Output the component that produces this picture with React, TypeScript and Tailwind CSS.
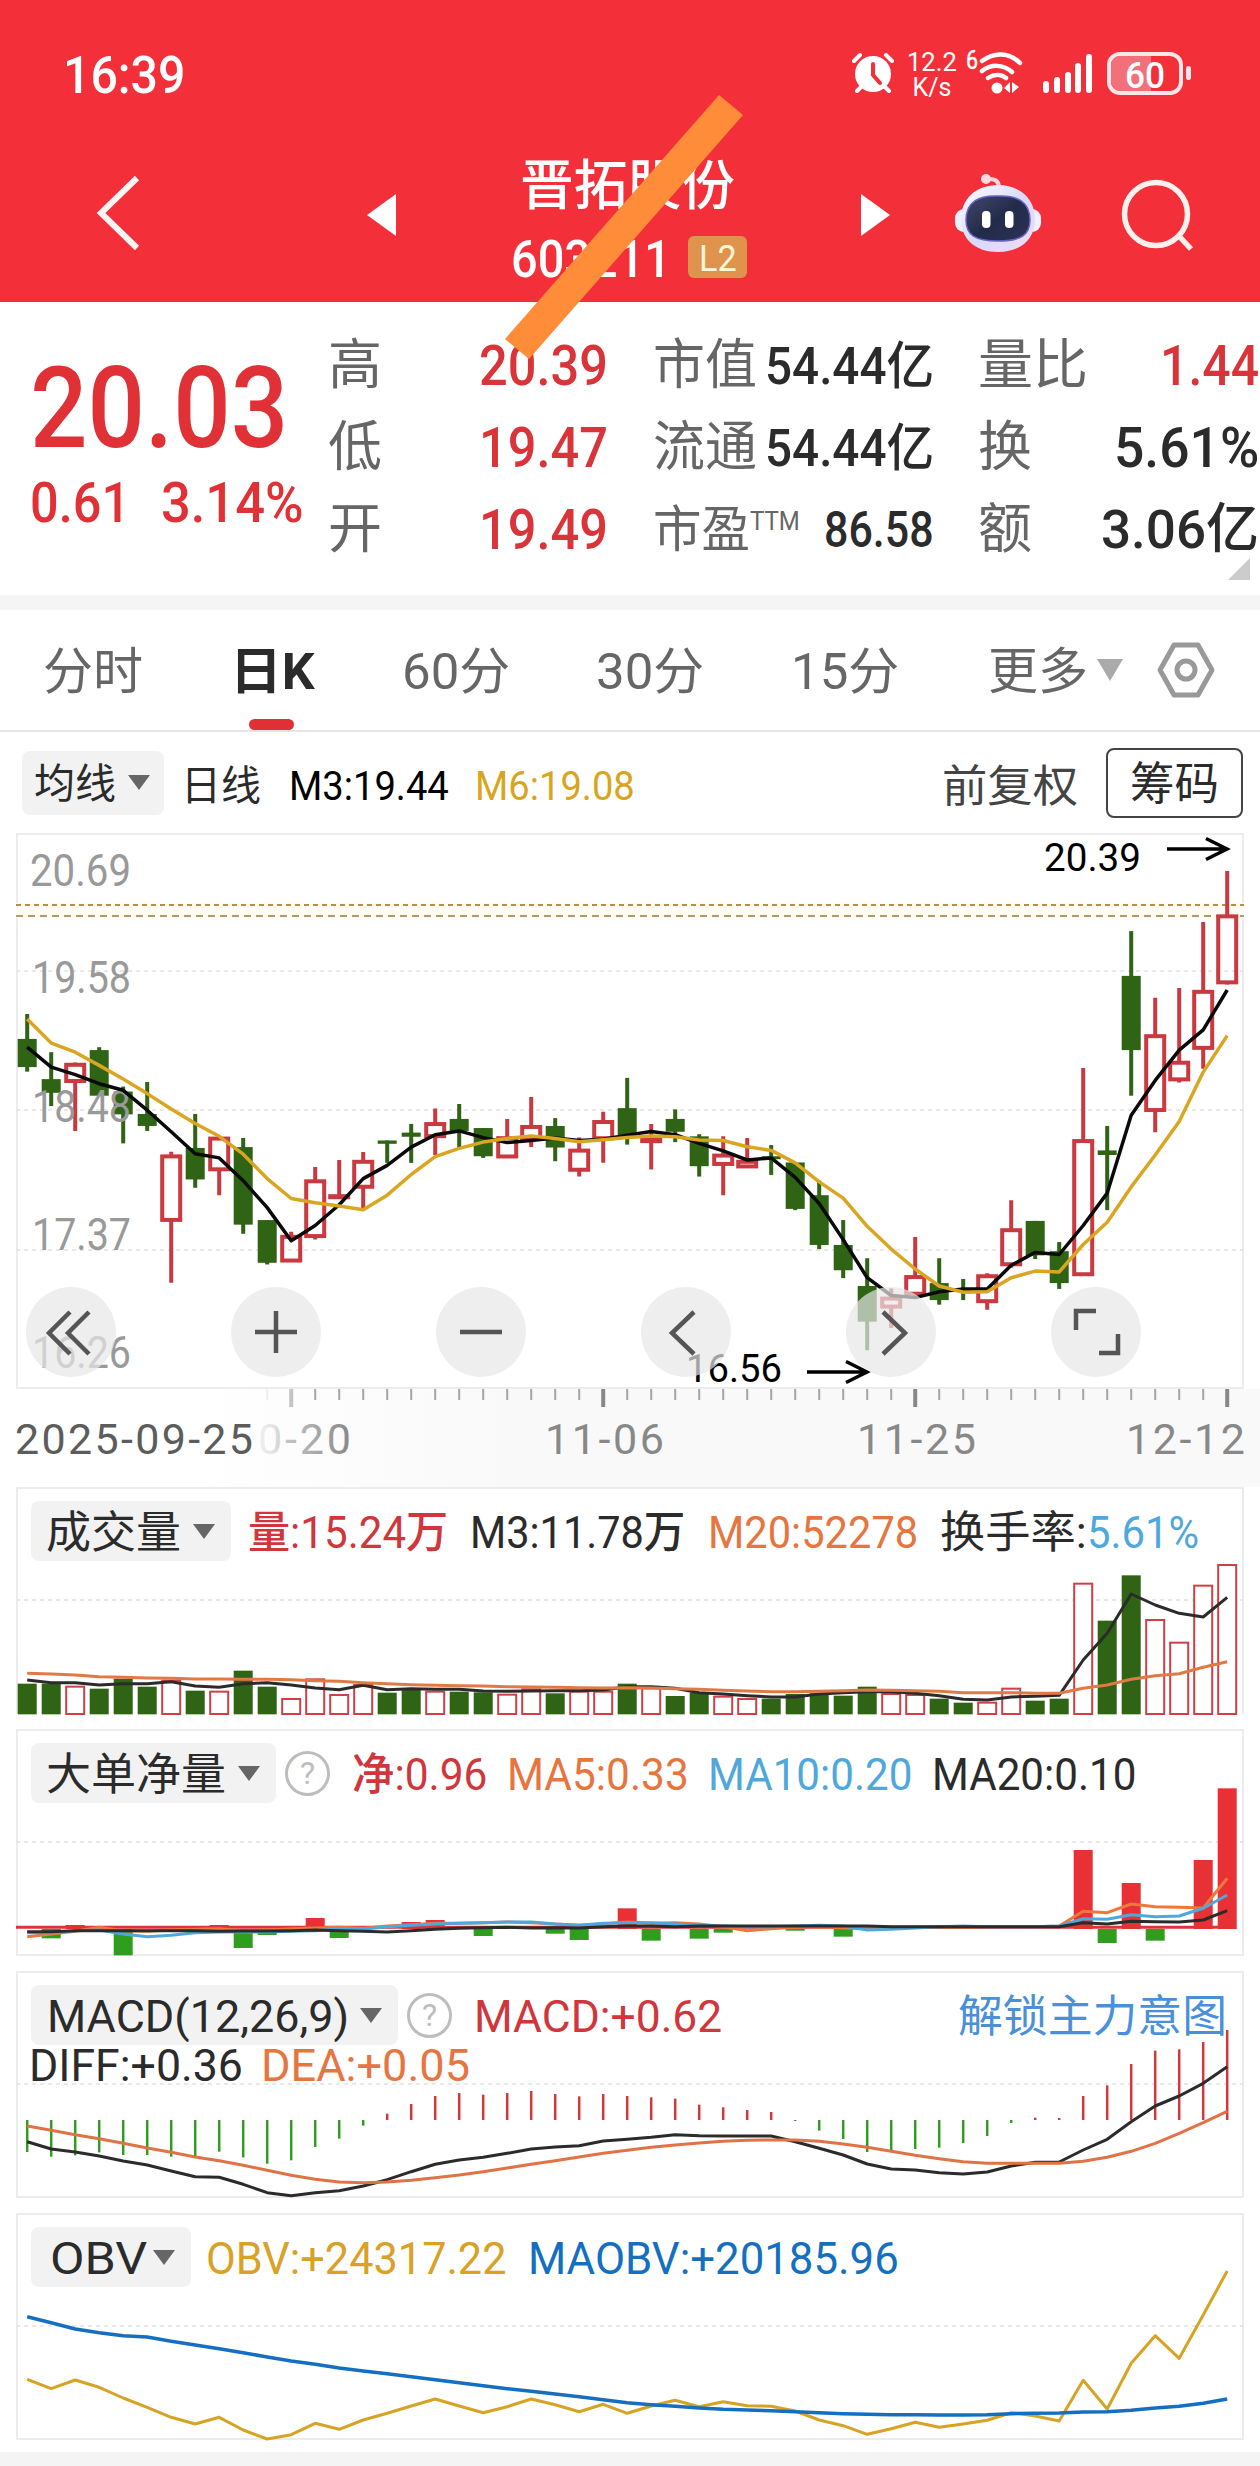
import { useLayoutEffect, useRef, useState, type ReactNode } from "react";
import { clsx } from "clsx";

const STEP = 24;
const BAR = 19;
const cx = (i: number) => 11.2 + i * STEP;

type Candle = [kind: "up" | "down", high: number, top: number, bottom: number, low: number];

// chart units, converted to panel pixels by the scales below
const candles: Candle[] = [
  ["down", 468, 528, 596, 607],
  ["down", 560, 625, 658, 690],
  ["up", 585, 588, 632, 750],
  ["down", 548, 555, 665, 665],
  ["down", 643, 655, 710, 780],
  ["down", 632, 709, 738, 750],
  ["up", 800, 809, 967, 1116],
  ["down", 709, 791, 867, 887],
  ["up", 763, 766, 845, 905],
  ["down", 767, 789, 976, 998],
  ["down", 965, 965, 1068, 1072],
  ["up", 993, 1003, 1065, 1066],
  ["up", 837, 869, 1006, 1012],
  ["up", 820, 905, 910, 910],
  ["up", 801, 822, 887, 940],
  ["down", 773, 773, 781, 827],
  ["down", 733, 754, 764, 827],
  ["up", 696, 731, 765, 808],
  ["down", 685, 721, 750, 790],
  ["down", 743, 743, 811, 815],
  ["up", 721, 765, 814, 815],
  ["up", 668, 738, 770, 789],
  ["down", 719, 738, 790, 823],
  ["up", 766, 795, 846, 860],
  ["up", 704, 726, 770, 827],
  ["down", 622, 695, 765, 783],
  ["up", 733, 765, 777, 843],
  ["down", 698, 721, 752, 777],
  ["down", 758, 763, 835, 860],
  ["up", 763, 807, 832, 905],
  ["up", 767, 822, 838, 838],
  ["down", 784, 811, 818, 856],
  ["down", 826, 826, 938, 941],
  ["down", 870, 905, 1025, 1035],
  ["down", 965, 1025, 1086, 1105],
  ["down", 1057, 1124, 1210, 1279],
  ["up", 1130, 1152, 1176, 1225],
  ["up", 1006, 1100, 1145, 1150],
  ["down", 1057, 1117, 1158, 1169],
  ["down", 1107, 1131, 1138, 1158],
  ["up", 1093, 1098, 1163, 1181],
  ["up", 917, 987, 1074, 1080],
  ["down", 967, 967, 1050, 1059],
  ["down", 1018, 1040, 1117, 1131],
  ["up", 598, 772, 1098, 1098],
  ["down", 738, 797, 808, 941],
  ["down", 268, 376, 555, 665],
  ["up", 429, 519, 702, 753],
  ["up", 405, 583, 628, 633],
  ["up", 246, 412, 552, 600],
  ["up", 123, 230, 394, 397],
];

const ma3 = [548, 596, 614, 636, 652, 700, 752, 805, 815, 870, 935, 1015, 978, 928, 865, 833, 789, 759, 750, 766, 778, 773, 767, 773, 770, 760, 751, 759, 780, 798, 820, 815, 862, 925, 1012, 1104, 1147, 1152, 1138, 1131, 1131, 1074, 1043, 1048, 978, 900, 712, 628, 555, 506, 410];
const ma6 = [480, 538, 560, 592, 625, 660, 697, 732, 763, 806, 865, 913, 923, 931, 940, 905, 855, 812, 792, 777, 768, 762, 768, 776, 771, 766, 762, 764, 772, 773, 788, 797, 827, 873, 912, 980, 1035, 1083, 1124, 1139, 1138, 1104, 1088, 1090, 1024, 970, 885, 808, 727, 608, 520];

const volume = [641, 641, 650, 656, 626, 650, 632, 662, 665, 602, 650, 687, 628, 675, 645, 668, 655, 665, 665, 667, 674, 658, 670, 665, 665, 641, 655, 678, 668, 680, 687, 686, 672, 670, 677, 650, 672, 675, 686, 698, 698, 656, 692, 686, 341, 452, 316, 450, 518, 347, 285];
const volumeUp = new Set([2, 6, 8, 11, 12, 13, 14, 17, 20, 21, 23, 24, 26, 29, 30, 36, 37, 40, 41, 44, 47, 48, 49, 50]);
const volM3 = [630, 638, 638, 645, 641, 641, 635, 648, 652, 641, 638, 645, 654, 659, 646, 659, 656, 658, 658, 663, 664, 663, 662, 662, 660, 650, 650, 655, 668, 672, 677, 681, 681, 672, 668, 665, 665, 670, 677, 688, 690, 681, 679, 676, 570, 490, 372, 405, 430, 441, 382];
const volM20 = [610, 612, 615, 620, 622, 624, 625, 627, 627, 628, 628, 629, 632, 634, 638, 641, 644, 646, 647, 648, 650, 651, 652, 653, 654, 653, 654, 656, 658, 661, 663, 665, 665, 664, 662, 660, 661, 662, 664, 668, 668, 668, 670, 670, 655, 645, 628, 617, 611, 592, 575];

const netFlow: [index: number, end: number][] = [
  [1, 655], [2, 615], [4, 706], [8, 615], [9, 684], [10, 645], [12, 594], [13, 654], [16, 606], [17, 600],
  [19, 648], [22, 641], [23, 660], [25, 565], [26, 662], [28, 656], [29, 638], [32, 632], [34, 650],
  [44, 390], [45, 669], [46, 489], [47, 662], [49, 420], [50, 205],
];
const flowMa5 = [650, 642, 634, 622, 632, 634, 630, 628, 626, 632, 630, 626, 624, 622, 625, 618, 614, 610, 610, 608, 606, 608, 612, 616, 612, 606, 610, 608, 612, 620, 632, 626, 622, 620, 624, 626, 624, 622, 622, 622, 620, 620, 620, 618, 574, 578, 552, 560, 562, 564, 475];
const flowMa10 = [638, 638, 632, 630, 642, 650, 646, 638, 636, 636, 636, 634, 632, 626, 628, 620, 616, 612, 610, 608, 606, 606, 612, 616, 610, 608, 608, 612, 616, 618, 620, 620, 618, 616, 618, 630, 628, 624, 620, 618, 620, 620, 620, 618, 596, 598, 584, 590, 588, 565, 525];
const flowMa20 = [635, 635, 632, 632, 632, 632, 632, 632, 634, 633, 633, 632, 630, 632, 634, 636, 632, 628, 625, 623, 622, 624, 623, 624, 620, 618, 618, 620, 618, 618, 618, 618, 618, 618, 618, 618, 620, 620, 620, 620, 620, 620, 620, 620, 608, 612, 604, 605, 606, 600, 572];

const macd = [576, 590, 586, 577, 585, 585, 590, 590, 575, 592, 611, 601, 561, 536, 497, 461, 432, 408, 399, 404, 399, 393, 402, 409, 402, 408, 412, 416, 434, 442, 450, 456, 483, 512, 537, 576, 572, 567, 563, 549, 528, 489, 473, 474, 408, 376, 312, 272, 268, 246, 210];
const diff = [545, 567, 576, 588, 603, 615, 633, 650, 652, 673, 698, 707, 698, 692, 678, 659, 635, 613, 600, 592, 580, 567, 561, 557, 543, 538, 532, 524, 527, 528, 528, 528, 545, 565, 585, 612, 627, 630, 638, 642, 636, 618, 607, 606, 570, 538, 485, 438, 408, 370, 320];
const dea = [498, 511, 524, 536, 550, 564, 577, 591, 602, 616, 631, 646, 658, 666, 668, 666, 661, 653, 645, 635, 624, 613, 602, 591, 580, 571, 562, 555, 549, 544, 541, 540, 540, 544, 552, 562, 574, 586, 596, 605, 610, 610, 610, 610, 604, 592, 574, 550, 520, 488, 454];

const obv = [538, 566, 540, 562, 594, 622, 652, 672, 652, 690, 717, 704, 670, 688, 660, 640, 618, 597, 618, 638, 620, 597, 614, 635, 613, 640, 618, 601, 620, 605, 617, 619, 633, 660, 677, 703, 686, 667, 682, 672, 661, 638, 648, 663, 541, 627, 490, 407, 475, 345, 213];
const maObv = [350, 368, 387, 398, 407, 411, 424, 435, 446, 458, 471, 483, 493, 504, 513, 521, 530, 539, 548, 557, 566, 574, 582, 590, 599, 608, 614, 619, 624, 628, 630, 632, 635, 638, 641, 643, 644, 644, 645, 645, 644, 641, 640, 639, 636, 635, 631, 624, 619, 610, 597];

const priceY = (v: number) => v / 2.412 - 13;
const volY = (v: number) => v / 3 - 17;
const flowY = (v: number) => v / 3 - 9;
const macdY = (v: number) => v / 3 - 11;
const obvY = (v: number) => v / 3 - 13;

// Text squeezed or stretched to the width set in className
function Fit({ className, children }: { className: string; children: ReactNode }) {
  const inner = useRef<HTMLSpanElement>(null);
  const [ratio, setRatio] = useState(1);

  useLayoutEffect(() => {
    const el = inner.current;
    if (!el || !el.parentElement) return;
    setRatio(el.parentElement.clientWidth / el.offsetWidth);
  }, [children]);

  return (
    <span className={clsx("block shrink-0 translate-y-0.5 leading-none whitespace-nowrap", className)}>
      <span ref={inner} className="inline-block origin-left" style={{ transform: `scaleX(${ratio})` }}>
        {children}
      </span>
    </span>
  );
}

function Line({ data, y, color, width = 3 }: { data: number[]; y: (v: number) => number; color: string; width?: number }) {
  return (
    <polyline
      points={data.map((v, i) => `${cx(i)},${y(v).toFixed(1)}`).join(" ")}
      fill="none"
      stroke={color}
      strokeWidth={width}
      strokeLinejoin="round"
    />
  );
}

function GridLine({ y }: { y: number }) {
  return <line x1="0" x2="1228" y1={y} y2={y} stroke="#e8e8e8" strokeWidth="2" strokeDasharray="4 4" />;
}

function Caret({ className }: { className?: string }) {
  return (
    <svg viewBox="0 0 22 15" className={clsx("h-[15px] w-[22px] shrink-0", className)}>
      <path d="M0 0h22L11 15z" fill="currentColor" />
    </svg>
  );
}

function Help() {
  return (
    <span className="flex size-[45px] shrink-0 items-center justify-center rounded-full border-[3px] border-[#bdbdbd] text-[32px] leading-none text-[#bdbdbd]">
      ?
    </span>
  );
}

function Panel({ className, chart, children }: { className: string; chart: ReactNode; children: ReactNode }) {
  return (
    <section className={clsx("relative mx-4 w-[1228px] border-2 border-[#ececec]", className)}>
      <svg className="absolute -top-0.5 -left-0.5 h-full w-[1228px] overflow-visible">{chart}</svg>
      {children}
    </section>
  );
}

function Picker({ className, width, label }: { className: string; width: string; label: string }) {
  return (
    <button className={clsx("flex h-[60px] shrink-0 items-center justify-between rounded-lg bg-[#f2f2f2] pr-4 pl-[13px] text-[#2b2b2b]", className)}>
      <Fit className={width}>{label}</Fit>
      <Caret className="text-[#666]" />
    </button>
  );
}

function StatusBar() {
  return (
    <div className="flex h-[146px] items-center pl-[63px] text-white">
      <Fit className="w-[122px] text-[51px] font-medium">16:39</Fit>
      <svg viewBox="0 0 42 42" className="ml-[667px] h-[42px] w-[42px]" fill="none" stroke="white" strokeLinecap="round">
        <circle cx="21" cy="22" r="18" fill="white" stroke="none" />
        <path d="M2 9l6-6M40 9l-6-6M9 35l-4 4M33 35l4 4" strokeWidth="4" />
        <path d="M21 12v11l7 8" stroke="#f32f39" strokeWidth="4" />
      </svg>
      <div className="ml-[13px] flex w-[50px] flex-col items-center font-[450]">
        <Fit className="w-[50px] text-[25px]">12.2</Fit>
        <Fit className="w-[39px] text-[25px]">K/s</Fit>
      </div>
      <svg viewBox="0 0 56 44" className="ml-[10px] h-11 w-14 overflow-visible" fill="none" stroke="white" strokeWidth="4.5" strokeLinecap="round">
        <text x="-1" y="18" className="text-[25px]" fill="white" stroke="white" strokeWidth="0.5" textLength="12" lengthAdjust="spacingAndGlyphs">6</text>
        <path d="M15 10c12-9 27-9 38 2M15 20c9-7 21-7 30 1M21 27c6-4 13-4 18 0" />
        <circle cx="30" cy="37" r="5.5" fill="white" stroke="none" />
        <path d="M43 31v11l-6-5zM45 31v11l7-6z" fill="white" stroke="none" />
      </svg>
      <svg viewBox="0 0 50 40" className="ml-[19px] h-10 w-[50px]" stroke="white" strokeWidth="6" strokeLinecap="round">
        <path d="M4 31v6M15 27v10M26 22v15M36 13v24M47 4v33" />
      </svg>
      <div className="relative ml-[15px] flex h-[43px] w-[76px] items-center justify-center overflow-hidden rounded-[13px] border-4 border-[#ffe6e6]">
        <span className="absolute inset-y-0 left-0 w-[40px] bg-[#f2707a]" />
        <Fit className="relative w-[40px] text-[37px] font-medium">60</Fit>
      </div>
      <span className="ml-[3px] h-[14px] w-[5px] rounded-full bg-[#ffe6e6]" />
    </div>
  );
}

function Robot() {
  return (
    <svg viewBox="0 0 86 80" className="ml-[65px] h-20 w-[86px]">
      <defs>
        <linearGradient id="shell" x1="0" y1="0" x2="1" y2="1">
          <stop offset="0" stopColor="#fff" />
          <stop offset="0.5" stopColor="#d7dafa" />
          <stop offset="1" stopColor="#f0dcf5" />
        </linearGradient>
        <linearGradient id="visor" x1="0" y1="0" x2="1" y2="1">
          <stop offset="0" stopColor="#44486b" />
          <stop offset="0.5" stopColor="#232b4a" />
          <stop offset="1" stopColor="#2b3252" />
        </linearGradient>
      </defs>
      <path d="M44 15c0-6-3-9-9-9" fill="none" stroke="#ffd3dc" strokeWidth="4" />
      <circle cx="31" cy="6" r="5" fill="#ffd9e0" />
      <rect x="0" y="36" width="86" height="23" rx="9" fill="#eef0ff" />
      <path d="M43 12c22 0 37 14 37 34S66 79 43 79 6 66 6 46s15-34 37-34z" fill="url(#shell)" />
      <path d="M43 23c19-1 32 6 32 24 0 15-9 21-32 21s-32-6-32-21c0-18 13-25 32-24z" fill="url(#visor)" stroke="#6b63c4" strokeWidth="1.5" />
      <rect x="27" y="38" width="8.500" height="17" rx="4" fill="#fff" />
      <rect x="50" y="38" width="8.500" height="17" rx="4" fill="#fff" />
    </svg>
  );
}

function Header() {
  return (
    <header className="relative h-[302px] bg-[#f32f39] text-white">
      <StatusBar />
      <div className="flex h-[134px] items-center pl-[96px]">
        <svg viewBox="0 0 44 76" className="h-[76px] w-11" fill="none" stroke="#fff4f4" strokeWidth="6">
          <path d="M41 3L5 38l36 35" />
        </svg>
        <svg viewBox="0 0 29 42" className="mt-1 ml-[227px] h-[42px] w-[29px]">
          <path d="M29 0v42L0 21z" fill="white" />
        </svg>
        <div className="mt-3.5 ml-[115px] flex w-[236px] flex-col">
          <Fit className="ml-[9px] w-[215px] text-[54px] font-medium">晋拓股份</Fit>
          <div className="mt-5 flex items-center">
            <Fit className="w-[160px] text-[51px] font-medium">603211</Fit>
            <span className="ml-[17px] flex h-[42px] w-[60px] items-center justify-center rounded-md bg-[#e0934d] text-[#fff6d8]">
              <Fit className="w-[38px] text-[36px]">L2</Fit>
            </span>
          </div>
        </div>
        <svg viewBox="0 0 29 42" className="mt-1 ml-[114px] h-[42px] w-[29px]">
          <path d="M0 0v42l29-21z" fill="white" />
        </svg>
        <Robot />
        <svg viewBox="0 0 74 72" className="mt-1 ml-20 h-[72px] w-[74px]" fill="none" stroke="#fff0ee" strokeWidth="5.500">
          <circle cx="35" cy="35" r="31.500" />
          <path d="M57 56l13 14" />
        </svg>
      </div>
      <svg viewBox="0 0 240 266" className="absolute top-[94px] left-[504px] z-10 h-[266px] w-60">
        <path d="M215 1l24 20L25 265 1 245z" fill="#ff8c38" />
      </svg>
    </header>
  );
}

function Quote() {
  return (
    <section className="flex h-[293px] pt-[21px] pl-[31px] font-medium text-[#2b2b2b]">
      <div className="w-[297px] text-[#e03236]">
        <Fit className="mt-[27px] ml-[-1px] w-[258px] text-[113px]">20.03</Fit>
        <div className="mt-[11px] flex">
          <Fit className="ml-[-1px] w-[100px] text-[55px]">0.61</Fit>
          <Fit className="ml-[31px] w-[143px] text-[55px]">3.14%</Fit>
        </div>
      </div>

      <div className="w-[280px]">
        {[["高", "20.39"], ["低", "19.47"], ["开", "19.49"]].map(([label, value]) => (
          <div key={label} className="flex h-[82px] items-center justify-between text-[#d9343a]">
            <Fit className="w-[54px] text-[54px] font-normal text-[#666]">{label}</Fit>
            <Fit className="w-[129px] text-[56px]">{value}</Fit>
          </div>
        ))}
      </div>

      <div className="ml-[45px] w-[281px]">
        {[["市值", "54.44亿"], ["流通", "54.44亿"]].map(([label, value]) => (
          <div key={label} className="flex h-[82px] items-center justify-between">
            <Fit className="w-[104px] text-[54px] font-normal text-[#666]">{label}</Fit>
            <Fit className="w-[169px] text-[51px]">{value}</Fit>
          </div>
        ))}
        <div className="flex h-[82px] items-center">
          <Fit className="w-[97px] text-[50px] font-normal text-[#666]">市盈</Fit>
          <Fit className="mb-[18px] w-[50px] text-[25px] font-normal text-[#666]">TTM</Fit>
          <Fit className="ml-[24px] w-[110px] text-[50px]">86.58</Fit>
        </div>
      </div>

      <div className="relative ml-[44px] w-[281px]">
        <div className="flex h-[82px] items-center justify-between">
          <Fit className="w-[110px] text-[54px] font-normal text-[#666]">量比</Fit>
          <Fit className="w-[99px] text-[56px] text-[#d9343a]">1.44</Fit>
        </div>
        <div className="flex h-[82px] items-center justify-between">
          <Fit className="w-[54px] text-[54px] font-normal text-[#666]">换</Fit>
          <Fit className="w-[145px] text-[56px]">5.61%</Fit>
        </div>
        <div className="flex h-[82px] items-center justify-between">
          <Fit className="w-[54px] text-[54px] font-normal text-[#666]">额</Fit>
          <Fit className="w-[158px] text-[54px]">3.06亿</Fit>
        </div>
        <svg viewBox="0 0 22 22" className="absolute top-[235px] right-[9px] size-[22px]">
          <path d="M22 0v22H0z" fill="#ccc" />
        </svg>
      </div>
    </section>
  );
}

function Tabs() {
  return (
    <nav className="flex h-[122px] items-center border-b-2 border-[#e6e6e6] pl-[43px] text-[50px] text-[#666]">
      <Fit className="w-[100px]">分时</Fit>
      <div className="relative ml-[87px]">
        <Fit className="w-[85px] font-bold text-[#2b2b2b]">日K</Fit>
        <span className="absolute top-[74px] left-[19px] h-[11px] w-[45px] rounded-full bg-[#e03034]" />
      </div>
      <Fit className="ml-[87px] w-[108px]">60分</Fit>
      <Fit className="ml-[86px] w-[108px]">30分</Fit>
      <Fit className="ml-[87px] w-[108px]">15分</Fit>
      <Fit className="ml-[89px] w-[100px]">更多</Fit>
      <svg viewBox="0 0 26 22" className="ml-[9px] h-[22px] w-[26px]">
        <path d="M0 0h26L13 22z" fill="#aaa" />
      </svg>
      <svg viewBox="0 0 58 56" className="ml-[34px] h-14 w-[58px]" fill="none" stroke="#999" strokeWidth="5" strokeLinejoin="round">
        <path d="M17 3h24l14 25-14 25H17L3 28z" />
        <circle cx="29" cy="28" r="9" />
      </svg>
    </nav>
  );
}

function AverageBar() {
  return (
    <div className="flex h-[101px] items-center pl-[22px] text-[41px] text-[#2b2b2b]">
      <button className="flex h-[64px] w-[142px] items-center justify-between rounded-lg bg-[#f2f2f2] px-3">
        <Fit className="w-[82px]">均线</Fit>
        <Caret className="mr-0.5 text-[#666]" />
      </button>
      <Fit className="mt-1 ml-[17px] w-[80px]">日线</Fit>
      <Fit className="mt-1 ml-[28px] w-[160px] font-[450] text-black">M3:19.44</Fit>
      <Fit className="mt-1 ml-[26px] w-[160px] font-[450] text-[#d9a520]">M6:19.08</Fit>
      <Fit className="mt-1 ml-[307px] w-[136px] text-[44px] text-[#444]">前复权</Fit>
      <button className="ml-[28px] flex h-[70px] w-[137px] items-center justify-center rounded-lg border-2 border-[#444]">
        <Fit className="w-[89px] text-[45px]">筹码</Fit>
      </button>
    </div>
  );
}

const axisPrices: [string, number, number][] = [
  ["20.69", 14, 53],
  ["19.58", 16, 160],
  ["18.48", 16, 289],
  ["17.37", 16, 417],
  ["16.26", 16, 535],
];

const tools = [
  "M-1-20l-21 21 21 21M18-20L-3 1l21 21",
  "M-21 0h42M0-21v42",
  "M-21 0h42",
  "M8-20L-14 1l22 21",
  "M-8-20L14 1l-22 21",
  "M-20-2v-19h20M3 21h19V2",
];

function PriceChart() {
  return (
    <section className="relative mx-4 h-[556px] w-[1228px] border-2 border-[#ececec]">
      <svg className="absolute -top-0.5 -left-0.5 h-[556px] w-[1228px] overflow-visible">
        <GridLine y={138} />
        <GridLine y={277} />
        <GridLine y={417} />
        <rect y="70" width="1228" height="15" fill="#fffdf3" />
        <line x2="1228" y1="72" y2="72" stroke="#c08a4a" strokeWidth="2" strokeDasharray="5 4" />
        <line x2="1228" y1="83" y2="83" stroke="#b59a63" strokeWidth="2" strokeDasharray="7 5" />
        {candles.map(([kind, high, top, bottom, low], i) => {
          const up = kind === "up";
          const y1 = priceY(top);
          const h = Math.max(priceY(bottom) - y1, 3);
          return up ? (
            <g key={i} stroke="#c9393f" strokeWidth="4" fill="none">
              <path d={`M${cx(i)} ${priceY(high)}V${y1}M${cx(i)} ${y1 + h}V${priceY(low)}`} />
              <rect x={cx(i) - 9} y={y1 + 1} width="18" height={Math.max(h - 2, 0.5)} />
            </g>
          ) : (
            <g key={i} fill="#2e6414">
              <rect x={cx(i) - 2} y={priceY(high)} width="4" height={priceY(low) - priceY(high)} />
              <rect x={cx(i) - 9.500} y={y1} width={BAR} height={h} />
            </g>
          );
        })}
        {axisPrices.map(([label, x, y]) => (
          <text key={label} x={x} y={y} fill="#999" className="text-[45px] font-[450]" textLength={label === "20.69" ? 101 : 99} lengthAdjust="spacingAndGlyphs">
            {label}
          </text>
        ))}
        <Line data={ma3} y={priceY} color="#0a0a0a" width={3.5} />
        <Line data={ma6} y={priceY} color="#daa520" width={3.5} />
        <g fill="#000" className="text-[39px]">
          <text x="1028" y="38" textLength="97" lengthAdjust="spacingAndGlyphs">20.39</text>
          <text x="670" y="549" textLength="96" lengthAdjust="spacingAndGlyphs">16.56</text>
        </g>
        <g fill="none" stroke="#000" strokeWidth="3.500">
          <path d="M1151 16h60M1190 5.500L1211 16l-21 10.500" />
          <path d="M791 539h60M830 528.500L851 539l-21 10.500" />
        </g>
      </svg>
      <div className="absolute top-[452px] left-[8px] flex gap-[115px]">
        {tools.map((d) => (
          <button key={d} className="size-[90px] rounded-full bg-[#e7e7e7]/70">
            <svg viewBox="-45 -45 90 90" className="size-[90px]" fill="none" stroke="#555" strokeWidth="4.500">
              <path d={d} />
            </svg>
          </button>
        ))}
      </div>
    </section>
  );
}

function DateAxis() {
  return (
    <div className="h-[98px] bg-linear-to-r from-white from-15% to-[#f9f9f9] to-40%">
      <svg className="h-[98px] w-[1260px]">
        <defs>
          <linearGradient id="fade" gradientUnits="userSpaceOnUse" x1="255" x2="350" y1="0" y2="0">
            <stop offset="0" stopColor="#f4f4f4" />
            <stop offset="0.2" stopColor="#e2e2e2" />
            <stop offset="0.3" stopColor="#c8c8c8" />
            <stop offset="1" stopColor="#888" />
          </linearGradient>
        </defs>
        {Array.from({ length: 41 }, (_, k) => {
          const i = k + 10;
          const major = [11, 24, 37, 50].includes(i);
          const color = i === 10 ? "#eee" : i === 11 ? "#c4c4c4" : major ? "#888" : "#a5a5a5";
          return <path key={i} d={`M${cx(i) + 16} 0v${major ? 18 : 11}`} stroke={color} strokeWidth={major ? 4 : 2} />;
        })}
        <g className="text-[43px] font-[450]" fill="#888">
          <text x="258" y="65" fill="url(#fade)" textLength="93" lengthAdjust="spacing">0-20</text>
          <text x="15" y="65" fill="#5c5c5c" textLength="238" lengthAdjust="spacing">2025-09-25</text>
          <text x="545" y="65" textLength="119" lengthAdjust="spacing">11-06</text>
          <text x="857" y="65" textLength="119" lengthAdjust="spacing">11-25</text>
          <text x="1126" y="65" textLength="119" lengthAdjust="spacing">12-12</text>
        </g>
      </svg>
    </div>
  );
}

function VolumePanel() {
  return (
    <Panel
      className="h-[227px] border-b-0"
      chart={
        <>
          <GridLine y={113} />
          {volume.map((v, i) =>
            volumeUp.has(i) ? (
              <rect key={i} x={cx(i) - 9} y={volY(v)} width="18" height={volY(732) - volY(v)} fill="#fff" stroke="#cf3f45" strokeWidth="2" />
            ) : (
              <rect key={i} x={cx(i) - 9.500} y={volY(v)} width={BAR} height={volY(733) - volY(v)} fill="#2e6414" />
            )
          )}
          <Line data={volM3} y={volY} color="#2b2b2b" />
          <Line data={volM20} y={volY} color="#e07a45" />
        </>
      }
    >
      <div className="relative flex items-center pt-3 pl-[13px] text-[44px] font-[450]">
        <Picker className="w-[200px] font-normal" width="w-[135px]" label="成交量" />
        <Fit className="ml-[17px] w-[200px] text-[#d0363c]">量:15.24万</Fit>
        <Fit className="ml-[22px] w-[215px] text-[#2b2b2b]">M3:11.78万</Fit>
        <Fit className="ml-[23px] w-[210px] text-[#e6753f]">M20:52278</Fit>
        <Fit className="ml-[22px] w-[147px] font-normal text-[#2b2b2b]">换手率:</Fit>
        <Fit className="w-[112px] text-[#4fa8db]">5.61%</Fit>
      </div>
    </Panel>
  );
}

function FlowPanel() {
  return (
    <Panel
      className="mt-[15px] h-[227px]"
      chart={
        <>
          <GridLine y={113} />
          {netFlow.map(([i, end]) => {
            const up = end < 622;
            return (
              <rect
                key={i}
                x={cx(i) - 9.500}
                y={up ? flowY(end) : flowY(627)}
                width={BAR}
                height={Math.abs(flowY(627) - flowY(end))}
                fill={up ? "#e93034" : "#2f9e1e"}
              />
            );
          })}
          <line x2="1219" y1={flowY(622)} y2={flowY(622)} stroke="#dd3437" strokeWidth="3" />
          <Line data={flowMa5} y={flowY} color="#f0763c" />
          <Line data={flowMa10} y={flowY} color="#4fa8db" />
          <Line data={flowMa20} y={flowY} color="#2b2b2b" />
        </>
      }
    >
      <div className="relative flex items-center pt-3 pl-[13px] text-[44px] font-[450]">
        <Picker className="w-[245px] font-normal" width="w-[180px]" label="大单净量" />
        <span className="ml-[9px]"><Help /></span>
        <Fit className="ml-[22px] w-[135px] text-[#d0363c]">净:0.96</Fit>
        <Fit className="ml-[20px] w-[182px] text-[#e6753f]">MA5:0.33</Fit>
        <Fit className="ml-[19px] w-[204px] text-[#4fa8db]">MA10:0.20</Fit>
        <Fit className="ml-[20px] w-[204px] text-[#2b2b2b]">MA20:0.10</Fit>
      </div>
    </Panel>
  );
}

function MacdPanel() {
  return (
    <Panel
      className="mt-[15px] h-[227px]"
      chart={
        <>
          <GridLine y={113} />
          {macd.map((v, i) => (
            <line key={i} x1={cx(i)} x2={cx(i)} y1={macdY(480)} y2={macdY(v)} stroke={v < 480 ? "#cf3a40" : "#2f9e1e"} strokeWidth="2.500" />
          ))}
          <Line data={diff} y={macdY} color="#2b2b2b" />
          <Line data={dea} y={macdY} color="#e07345" />
        </>
      }
    >
      <div className="relative pt-3 pl-[13px] text-[44px] font-[450]">
        <div className="flex items-center">
          <Picker className="w-[367px]" width="w-[302px]" label="MACD(12,26,9)" />
          <span className="ml-[9px]"><Help /></span>
          <Fit className="ml-[22px] w-[248px] text-[#d0363c]">MACD:+0.62</Fit>
          <Fit className="ml-[236px] w-[269px] font-normal text-[#4a90d9]">解锁主力意图</Fit>
        </div>
        <div className="-mt-[3px] flex items-center">
          <Fit className="-ml-[2px] w-[214px] text-[#2b2b2b]">DIFF:+0.36</Fit>
          <Fit className="ml-[18px] w-[209px] text-[#e6753f]">DEA:+0.05</Fit>
        </div>
      </div>
    </Panel>
  );
}

function ObvPanel() {
  return (
    <Panel
      className="mt-[15px] h-[227px]"
      chart={
        <>
          <GridLine y={113} />
          <Line data={obv} y={obvY} color="#d6a324" />
          <Line data={maObv} y={obvY} color="#146fc0" width={3.5} />
        </>
      }
    >
      <div className="relative flex items-center pt-3 pl-[13px] text-[44px] font-[450]">
        <Picker className="w-[160px]" width="w-[97px]" label="OBV" />
        <Fit className="ml-[15px] w-[301px] text-[#d9a126]">OBV:+24317.22</Fit>
        <Fit className="ml-[21px] w-[371px] text-[#146fc0]">MAOBV:+20185.96</Fit>
      </div>
    </Panel>
  );
}

export default function App() {
  return (
    <main className="h-[2466px] w-[1260px] overflow-hidden bg-white font-['Roboto','Noto_Sans_CJK_SC',sans-serif]">
      <Header />
      <Quote />
      <div className="h-[15px] bg-[#f5f5f5]" />
      <Tabs />
      <AverageBar />
      <PriceChart />
      <DateAxis />
      <VolumePanel />
      <FlowPanel />
      <MacdPanel />
      <ObvPanel />
      <div className="mt-[12px] h-[15px] bg-[#f4f4f4]" />
    </main>
  );
}
